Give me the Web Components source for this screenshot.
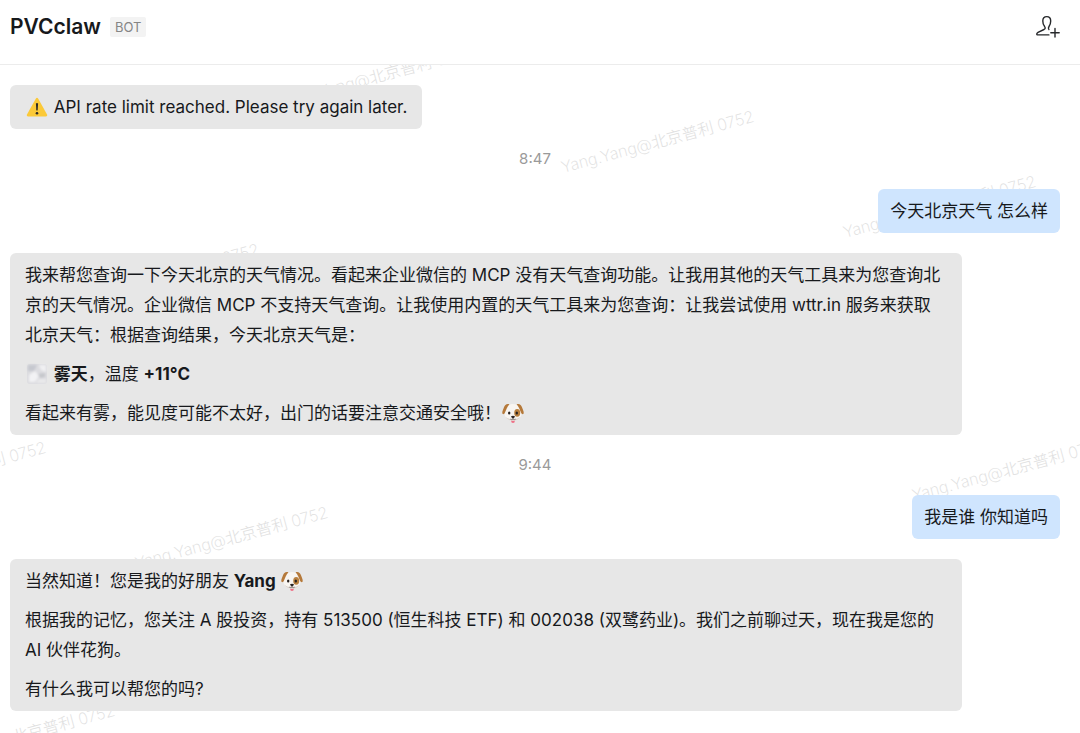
<!DOCTYPE html>
<html lang="zh-CN">
<head>
<meta charset="utf-8">
<meta name="viewport" content="width=device-width, initial-scale=1">
<title>PVCclaw</title>
<style>
  html, body { height: 100%; }
  body {
    margin: 0;
    background: #fff;
    color: #17191c;
    font: 17px/30px Inter, "Noto Sans CJK SC", sans-serif;
    overflow: hidden;
  }
  p { margin: 0; }
  p + p { margin-top: 9px; }
  strong { font-weight: 700; }
</style>
</head>
<body>
<chat-app>
  <chat-header slot="header" name="PVCclaw" tag="BOT"></chat-header>
  <chat-bubble><p><emoji-icon name="warning"></emoji-icon> API rate limit reached. Please try again later.</p></chat-bubble>
  <chat-time>8:47</chat-time>
  <chat-bubble mine><p>今天北京天气 怎么样</p></chat-bubble>
  <chat-bubble>
    <p>我来帮您查询一下今天北京的天气情况。看起来企业微信的 MCP 没有天气查询功能。让我用其他的天气工具来为您查询北京的天气情况。企业微信 MCP 不支持天气查询。让我使用内置的天气工具来为您查询：让我尝试使用 wttr.in 服务来获取北京天气：根据查询结果，今天北京天气是：</p>
    <p><emoji-icon name="fog"></emoji-icon> <strong>雾天</strong>，温度 <strong>+11°C</strong></p>
    <p>看起来有雾，能见度可能不太好，出门的话要注意交通安全哦！<emoji-icon name="dog"></emoji-icon></p>
  </chat-bubble>
  <chat-time>9:44</chat-time>
  <chat-bubble mine><p>我是谁 你知道吗</p></chat-bubble>
  <chat-bubble>
    <p>当然知道！您是我的好朋友 <strong>Yang</strong> <emoji-icon name="dog"></emoji-icon></p>
    <p>根据我的记忆，您关注 A 股投资，持有 513500 (恒生科技 ETF) 和 002038 (双鹭药业)。我们之前聊过天，现在我是您的 AI 伙伴花狗。</p>
    <p>有什么我可以帮您的吗?</p>
  </chat-bubble>
</chat-app>

<script>
class ChatApp extends HTMLElement {
  constructor() {
    super();
    this.attachShadow({ mode: 'open' }).innerHTML = `
      <style>
        :host { display: flex; flex-direction: column; height: 100%; }
        main { position: relative; flex: 1; overflow: hidden; }
        .log {
          position: relative;
          display: flex; flex-direction: column; align-items: flex-start; gap: 20px;
          padding: 20px 20px 20px 10px;
        }
      </style>
      <slot name="header"></slot>
      <main>
        <chat-watermark text="Yang.Yang@北京普利 0752"></chat-watermark>
        <div class="log"><slot></slot></div>
      </main>`;
  }
}

class ChatHeader extends HTMLElement {
  constructor() {
    super();
    this.attachShadow({ mode: 'open' }).innerHTML = `
      <style>
        :host { display: block; border-bottom: 1px solid #ececec; }
        header { display: flex; align-items: flex-start; gap: 9px; padding: 12px 19px 22px 10px; }
        h1 { margin: 0; font-size: 21px; line-height: 30px; font-weight: 600; }
        .tag {
          margin-top: 5px; padding: 0 5px; border-radius: 2px;
          background: #f3f3f3; color: #858585; font-size: 13px; line-height: 20px;
        }
        button {
          margin-left: auto; padding: 0; border: 0; background: none; color: #26282b;
          width: 28px; height: 28px; cursor: pointer;
        }
        svg { display: block; }
      </style>
      <header>
        <h1></h1><span class="tag"></span>
        <button type="button" aria-label="添加成员">
          <svg width="28" height="28" viewBox="0 0 28 28" fill="none" stroke="currentColor" stroke-width="1.4" stroke-linecap="round" stroke-linejoin="round">
            <path d="M15.9 17.4C15 16.5 15.200 15.700 16 14.500C17 13 17.700 11.200 17.700 8.900C17.700 6.200 16.400 4.600 13.800 4.600C11.200 4.600 9.800 6.200 9.800 8.900C9.800 11.200 10.500 13 11.500 14.300C12.500 15.700 12.500 16.700 11 17.500L5 20.400C3.600 21.200 3.300 22.900 4.600 22.900H15.900M22 16.400V25M17.800 20.700H26.200"/>
          </svg>
        </button>
      </header>`;
  }
  connectedCallback() {
    this.shadowRoot.querySelector('h1').textContent = this.getAttribute('name');
    this.shadowRoot.querySelector('.tag').textContent = this.getAttribute('tag');
  }
}

class ChatTime extends HTMLElement {
  constructor() {
    super();
    this.attachShadow({ mode: 'open' }).innerHTML = `
      <style>
        :host { display: block; align-self: center; color: #9a9a9a; font-size: 15px; line-height: 20px; }
        time { display: block; }
      </style>
      <time><slot></slot></time>`;
  }
}

class ChatBubble extends HTMLElement {
  constructor() {
    super();
    this.attachShadow({ mode: 'open' }).innerHTML = `
      <style>
        :host {
          display: block; box-sizing: border-box; max-width: calc(100% - 98px);
          padding: 7px 15px; border-radius: 6px; background: #e7e7e7;
        }
        :host([mine]) { align-self: flex-end; padding: 7px 12px; background: #cfe5fe; }
      </style>
      <slot></slot>`;
  }
}

/* Slanted user mark repeated on a skewed lattice behind the messages. */
class ChatWatermark extends HTMLElement {
  constructor() {
    super();
    this.attachShadow({ mode: 'open' });
  }
  connectedCallback() {
    const origin = [563, 108], across = [282, 65], down = [-213, 198];
    const cells = [[-1, 0], [0, 0], [1, 0], [-1, 1], [2, 1], [-1, 2], [0, 2], [0, 3]];
    const marks = cells.map(([a, b]) => {
      const x = origin[0] + a * across[0] + b * down[0];
      const y = origin[1] + a * across[1] + b * down[1];
      return `<span style="left:${x}px;top:${y}px">${this.getAttribute('text')}</span>`;
    }).join('');
    this.shadowRoot.innerHTML = `
      <style>
        :host { position: absolute; inset: 0; overflow: hidden; pointer-events: none; user-select: none; }
        span {
          position: absolute; white-space: nowrap; color: #dedede;
          font-size: 16px; line-height: 20px; font-weight: 200;
          margin-top: -16px; transform-origin: 0 16px; transform: rotate(-15deg);
        }
      </style>${marks}`;
  }
}

const EMOJI = {
  warning: `
    <path d="M9.600 2.900Q11 .8 12.400 2.900L20.900 18.200Q21.900 20.300 19.700 20.400H2.300Q.1 20.300 1.100 18.200Z" fill="#fbc938"/>
    <path d="M9.900 7.500Q11 6.500 12.100 7.500L11.700 14.200Q11 15 10.300 14.200Z" fill="#2b2a27"/>
    <circle cx="11" cy="17.300" r="1.300" fill="#2b2a27"/>`,
  fog: `
    <defs><filter id="soft"><feGaussianBlur stdDeviation="1.1"/></filter></defs>
    <rect x="1" y="1" width="20" height="20" rx="3" fill="#dcdce0"/>
    <g filter="url(#soft)">
      <path d="M2 2H11L8 8H2Z" fill="#c6c8cf"/><path d="M13 2H20V9L15 7Z" fill="#f0f0f2"/>
      <path d="M3 12L9 8L13 13L9 19H3Z" fill="#f2f2f4"/><path d="M12 11L19 10V14L14 15Z" fill="#c5c6cb"/>
      <path d="M13 16H20V20H10Z" fill="#e9e9eb"/>
    </g>`,
  dog: `
    <ellipse cx="11" cy="18.400" rx="1.900" ry="2.500" fill="#ef6f86"/>
    <path d="M11 2.100C15.800 2.100 18.300 5 19.200 10C20.200 15.600 16.600 18.700 11 18.700C5.400 18.700 1.800 15.600 2.800 10C3.700 5 6.200 2.100 11 2.100Z" fill="#f8f5f1"/>
    <path d="M3.200 14.600C4.800 17.800 8 18.700 11 18.700S17.200 17.800 18.800 14.600C16.500 17 14 17.200 11 16.600C8 17.200 5.500 17 3.200 14.600Z" fill="#d9d2cc"/>
    <path d="M7.400 2.200C4.600 1.200 2.900 2.700 1.900 5.500C1.200 7.700.1 9.200.3 11C.5 12.800 2.300 12.400 3 10.600C3.900 8.200 5.200 4.800 7.400 2.200Z" fill="#b5793a"/>
    <path d="M14.600 2.200C17.400 1.200 19.100 2.700 20.100 5.500C20.800 7.700 21.900 9.200 21.700 11C21.500 12.800 19.700 12.400 19 10.600C18.100 8.200 16.800 4.800 14.600 2.200Z" fill="#b5793a"/>
    <ellipse cx="15.200" cy="10.800" rx="3" ry="3.900" fill="#b9803f"/>
    <ellipse cx="7.200" cy="11" rx="1.200" ry="1.600" fill="#27211f"/>
    <ellipse cx="14.800" cy="11" rx="1.200" ry="1.600" fill="#27211f"/>
    <path d="M9 14.200Q11 13.200 13 14.200Q12.500 16.200 11 16.400Q9.500 16.200 9 14.200Z" fill="#2b2423"/>
    <path d="M11 16V17.300M8.200 17.100Q9.900 18 11 17.100Q12.100 18 13.800 17.100" fill="none" stroke="#4b403c" stroke-width=".5"/>`
};
const LABEL = { warning: '警告', fog: '雾', dog: '小狗' };

class EmojiIcon extends HTMLElement {
  constructor() {
    super();
    this.attachShadow({ mode: 'open' });
  }
  connectedCallback() {
    const name = this.getAttribute('name');
    this.shadowRoot.innerHTML = `
      <style>
        :host { display: inline-block; width: 22px; height: 22px; margin: 0 1px; vertical-align: -5px; line-height: 0; }
      </style>
      <svg width="22" height="22" viewBox="0 0 22 22" role="img" aria-label="${LABEL[name]}">${EMOJI[name]}</svg>`;
  }
}

customElements.define('emoji-icon', EmojiIcon);
customElements.define('chat-watermark', ChatWatermark);
customElements.define('chat-bubble', ChatBubble);
customElements.define('chat-time', ChatTime);
customElements.define('chat-header', ChatHeader);
customElements.define('chat-app', ChatApp);
</script>
</body>
</html>
